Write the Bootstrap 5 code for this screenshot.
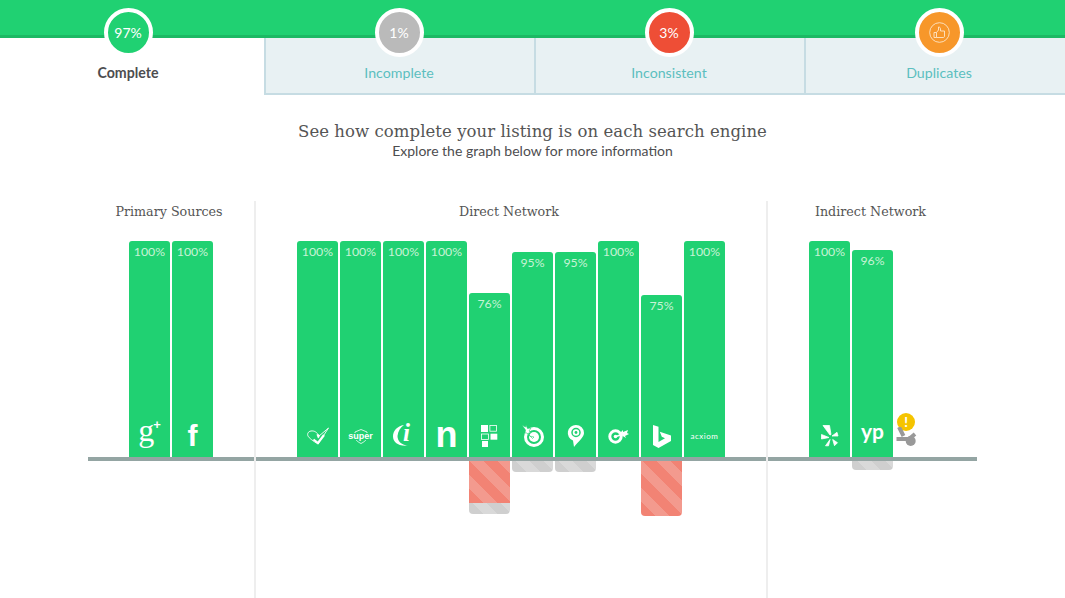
<!DOCTYPE html>
<html lang="en"><head><meta charset="utf-8"><title>Listing</title>
<link rel="stylesheet" href="https://cdn.jsdelivr.net/npm/bootstrap@5.3.0/dist/css/bootstrap.min.css">
<style>
html,body{height:100%;overflow:hidden}
body{font-family:"Lato","Noto Sans",sans-serif;color:#4d4d4f;background:#fff}
.topstrip{height:38px;background:#20d172;border-bottom:3px solid #1cb964}
.tabrow{height:57px}
.tabcell{width:270px;flex:none;padding-right:2px;background:#e8f1f3;border-left:2px solid #c6dce3;border-bottom:2px solid #c6dce3;color:#5cbfbf;font-size:14.2px}
.tabcell.firstcell{width:264px;padding-right:8px;background:#fff;border:0;color:#4d4d4f;font-weight:700}
.dial{width:49px;height:49px;margin-top:-30px;border:4px solid #fff;border-radius:50%;color:#fff;font-size:14px;font-weight:400}
.dial-green{background:#20d172}.dial-grey{background:#bababa}.dial-red{background:#ee4e36}.dial-orange{background:#f7972a}
.tablabel{margin-top:7px;line-height:17px}
.headline{margin-top:26px;font-family:"DejaVu Serif",serif;font-size:16.5px;line-height:21px;color:#555;letter-spacing:.06px}
.subline{font-size:14px;line-height:18px;color:#4d4d4f}
.chartwrap{margin:41px 88px 0;width:889px;height:397px}
.zone{height:397px}
.zone-a{width:166px}.zone-b{width:514px;border-left:2px solid #eee;border-right:2px solid #eee}.zone-c{width:209px}
.zonetitle{font-family:"DejaVu Serif",serif;font-size:12.7px;line-height:22px;color:#555;text-align:center;height:40px;padding-right:4px}
.barsplit{height:216px;gap:2px}
.underrow{gap:2px}
.barbase{height:4px;background:#94a5a3}
.barcol{width:41px}
.barfill{background:#20d172;border-radius:3px 3px 0 0;color:#c8f3d6;font-size:12.3px;line-height:14px;padding-top:4px}
.barlogo{height:40px;margin-bottom:1px;color:#fff}
.barlogo svg{display:block;overflow:visible}
.undercol{width:41px}
.under-red{background:repeating-linear-gradient(45deg,#f28374 0 10px,#f39a8e 10px 20px)}
.under-grey{background:repeating-linear-gradient(45deg,#cfcfcf 0 10px,#d9d9d9 10px 20px)}
.under-end{border-radius:0 0 4px 4px}
.lg-gplus{font-family:"Liberation Serif",serif;font-size:32px;line-height:32px;padding-bottom:13px}
.lg-gplus sup{font-family:"Liberation Sans",sans-serif;font-size:13px;top:-.85em;font-weight:700;margin-left:-1px}
.lg-f{font-family:"Liberation Sans",sans-serif;font-weight:700;font-size:30px;line-height:30px}
.lg-n{font-family:"Liberation Sans",sans-serif;font-weight:700;font-size:36px;line-height:30px;padding-bottom:2px}
.lg-yp{font-size:21px;font-weight:700;line-height:24px;padding-bottom:10px}
.lg-super{font-family:"Liberation Sans",sans-serif;font-size:9px;font-weight:700;line-height:7px;background:#20d172;padding:0 1px}
.lg-acx{font-size:8px;line-height:8px;letter-spacing:.5px}
.alertpin{width:41px}
.alertdot{width:18px;height:18px;margin-left:2px;border-radius:50%;background:#f5c400;color:#fff;font-size:13px;font-weight:900;line-height:18px;text-align:center}
.toolmark{margin:-4px 0 10px}
</style></head><body>
<div class="topstrip"></div>
<div class="d-flex tabrow">
 <div class="tabcell firstcell d-flex flex-column align-items-center"><div class="dial dial-green d-flex align-items-center justify-content-center">97%</div><div class="tablabel">Complete</div></div>
 <div class="tabcell d-flex flex-column align-items-center"><div class="dial dial-grey d-flex align-items-center justify-content-center">1%</div><div class="tablabel">Incomplete</div></div>
 <div class="tabcell d-flex flex-column align-items-center"><div class="dial dial-red d-flex align-items-center justify-content-center">3%</div><div class="tablabel">Inconsistent</div></div>
 <div class="tabcell d-flex flex-column align-items-center"><div class="dial dial-orange d-flex align-items-center justify-content-center">
  <svg width="21" height="21" viewBox="0 0 21 21" fill="none" stroke="#fde6c8" stroke-width=".9"><circle cx="10.500" cy="10.500" r="9.800"/><path d="M5 10.500h2.500v5H5zM7.500 10.500l2-2.500V5c1.500 0 2 1 2 2v2h4v5c0 1-.5 1.500-1.500 1.500H7.500"/></svg>
 </div><div class="tablabel">Duplicates</div></div>
</div>
<div class="text-center">
 <div class="headline">See how complete your listing is on each search engine</div>
 <div class="subline">Explore the graph below for more information</div>
</div>
<div class="chartwrap d-flex">
 <div class="zone zone-a">
  <div class="zonetitle">Primary Sources</div>
  <div class="barsplit d-flex justify-content-center">
   <div class="barcol d-flex flex-column justify-content-end"><div class="barfill text-center d-flex flex-column justify-content-between" style="height:216px"><span>100%</span><div class="barlogo d-flex align-items-center justify-content-center"><span class="lg-gplus">g<sup>+</sup></span></div></div></div>
   <div class="barcol d-flex flex-column justify-content-end"><div class="barfill text-center d-flex flex-column justify-content-between" style="height:216px"><span>100%</span><div class="barlogo d-flex align-items-center justify-content-center"><span class="lg-f">f</span></div></div></div>
  </div>
  <div class="barbase"></div>
 </div>
 <div class="zone zone-b">
  <div class="zonetitle">Direct Network</div>
  <div class="barsplit d-flex justify-content-center">
   <div class="barcol d-flex flex-column justify-content-end"><div class="barfill text-center d-flex flex-column justify-content-between" style="height:216px"><span>100%</span><div class="barlogo d-flex align-items-center justify-content-center"><svg width="22" height="18" viewBox="0 0 22 18" fill="none" stroke="#fff"><path d="M21.500 1L12 9C10 5 7 3.500 4 4 1 4.500 0 7 1 9c1 2 5 5 10 8L21.500 1" stroke-width=".9"/><path d="M6.500 12.500L11 16l6-8" stroke-width="2.200"/><path d="M9.500 7.500c1-.5 2-.5 3 .5v2l-1.500 1.500z" fill="#fff" stroke="none"/></svg></div></div></div>
   <div class="barcol d-flex flex-column justify-content-end"><div class="barfill text-center d-flex flex-column justify-content-between" style="height:216px"><span>100%</span><div class="barlogo d-flex align-items-center justify-content-center position-relative"><svg width="14" height="15" viewBox="0 0 14 15" fill="none" stroke="#fff" stroke-width=".8"><path d="M7 .5l6 2.500v5c0 3-3 5-6 6.500-3-1.500-6-3.500-6-6.500V3z"/></svg><span class="lg-super position-absolute">super</span></div></div></div>
   <div class="barcol d-flex flex-column justify-content-end"><div class="barfill text-center d-flex flex-column justify-content-between" style="height:216px"><span>100%</span><div class="barlogo d-flex align-items-center justify-content-center"><svg width="22" height="22" viewBox="0 0 22 22"><path d="M11 0C4 1 0 6 0 11.500 0 17 5 21.500 15 20.500 8 20 4.500 16 4.500 11 5 6 7.500 2.500 11 0z" fill="#fff"/><text x="10" y="16" font-family="Liberation Serif" font-style="italic" font-weight="700" font-size="25" fill="#fff">i</text></svg></div></div></div>
   <div class="barcol d-flex flex-column justify-content-end"><div class="barfill text-center d-flex flex-column justify-content-between" style="height:216px"><span>100%</span><div class="barlogo d-flex align-items-center justify-content-center"><span class="lg-n">n</span></div></div></div>
   <div class="barcol d-flex flex-column justify-content-end"><div class="barfill text-center d-flex flex-column justify-content-between" style="height:164px"><span>76%</span><div class="barlogo d-flex align-items-center justify-content-center"><svg width="17" height="22" viewBox="0 0 17 22"><rect x="0" y="0" width="7" height="7" fill="#fff"/><rect x="8.900" y=".4" width="6.500" height="5.800" fill="none" stroke="#fff" stroke-width=".8"/><rect x=".4" y="9" width="7" height="5.500" fill="none" stroke="#fff" stroke-width=".8"/><rect x="9.500" y="8.700" width="6.800" height="6" fill="#fff"/><rect x="1" y="16" width="6" height="6" fill="#fff"/></svg></div></div></div>
   <div class="barcol d-flex flex-column justify-content-end"><div class="barfill text-center d-flex flex-column justify-content-between" style="height:205px"><span>95%</span><div class="barlogo d-flex align-items-center justify-content-center"><svg width="22" height="22" viewBox="0 0 22 22" fill="none"><circle cx="12" cy="12" r="8.500" stroke="#fff" stroke-width="3"/><circle cx="12" cy="12" r="5" fill="#fff"/><path d="M0 0l3.500 2 .5-2 1.500 3.500L9 3 7 6l2 1.500-2.500.5 1 3L12 12l-1.500 1.500L5 8l-2 0 .5-3z" fill="#fff" stroke="#20d172" stroke-width=".6"/></svg></div></div></div>
   <div class="barcol d-flex flex-column justify-content-end"><div class="barfill text-center d-flex flex-column justify-content-between" style="height:205px"><span>95%</span><div class="barlogo d-flex align-items-center justify-content-center"><svg width="16" height="22" viewBox="0 0 16 22"><path d="M8 0a8 8 0 0 1 8 8c0 4-5 8-10 14L5 15.500A8 8 0 0 1 8 0z" fill="#fff"/><circle cx="8" cy="7.500" r="4" fill="none" stroke="#20d172" stroke-width="1.500"/><circle cx="8" cy="7.500" r="1.400" fill="#20d172"/></svg></div></div></div>
   <div class="barcol d-flex flex-column justify-content-end"><div class="barfill text-center d-flex flex-column justify-content-between" style="height:216px"><span>100%</span><div class="barlogo d-flex align-items-center justify-content-center"><svg width="22" height="15" viewBox="0 0 22 15" fill="none"><circle cx="7.500" cy="7.500" r="5.700" stroke="#fff" stroke-width="3"/><circle cx="7.500" cy="7.500" r="1.800" fill="#fff"/><path d="M8 7.500L15 5" stroke="#fff" stroke-width="1.800"/><path d="M13 3l2-2v2l5-2-1 3 2 1-4 2 1 2-5-3z" fill="#fff"/></svg></div></div></div>
   <div class="barcol d-flex flex-column justify-content-end"><div class="barfill text-center d-flex flex-column justify-content-between" style="height:162px"><span>75%</span><div class="barlogo d-flex align-items-center justify-content-center"><svg width="18" height="23" viewBox="0 0 18 23"><path d="M0 0l5.500 1.800v15.200l6.500-3.800-3.200-1.500-2-5L18 10.500v5.500L5.500 23 0 20z" fill="#fff"/></svg></div></div></div>
   <div class="barcol d-flex flex-column justify-content-end"><div class="barfill text-center d-flex flex-column justify-content-between" style="height:216px"><span>100%</span><div class="barlogo d-flex align-items-center justify-content-center"><span class="lg-acx">acxiom</span></div></div></div>
  </div>
  <div class="barbase"></div>
  <div class="underrow d-flex justify-content-center">
   <div class="undercol"></div><div class="undercol"></div><div class="undercol"></div><div class="undercol"></div>
   <div class="undercol"><div class="under-red" style="height:42px"></div><div class="under-grey under-end" style="height:11px"></div></div>
   <div class="undercol"><div class="under-grey under-end" style="height:11px"></div></div>
   <div class="undercol"><div class="under-grey under-end" style="height:11px"></div></div>
   <div class="undercol"></div>
   <div class="undercol"><div class="under-red under-end" style="height:55px"></div></div>
   <div class="undercol"></div>
  </div>
 </div>
 <div class="zone zone-c">
  <div class="zonetitle">Indirect Network</div>
  <div class="barsplit d-flex justify-content-center">
   <div class="barcol d-flex flex-column justify-content-end"><div class="barfill text-center d-flex flex-column justify-content-between" style="height:216px"><span>100%</span><div class="barlogo d-flex align-items-center justify-content-center"><svg width="18" height="22" viewBox="0 0 18 22" fill="#fff" stroke="#fff" stroke-width=".8" stroke-linejoin="round"><path d="M2 .5h6.500L10 9.500l-1 .5zM.5 9.500v4.500l7.500-1.500zM4.500 20.800h3L9 14.500zM11.700 14.500l4.800 3.200-3 3zM11 11l5-3.700 1 3.700z"/></svg></div></div></div>
   <div class="barcol d-flex flex-column justify-content-end"><div class="barfill text-center d-flex flex-column justify-content-between" style="height:207px"><span>96%</span><div class="barlogo d-flex align-items-center justify-content-center"><span class="lg-yp">yp</span></div></div></div>
   <div class="alertpin d-flex flex-column justify-content-end align-items-start"><div class="alertdot">!</div><svg class="toolmark" width="22" height="20" viewBox="0 0 22 20" fill="none" stroke="#999"><path d="M4 0l4.500 9M14 12L20 7M1.500 12H15" stroke-width="4" /><circle cx="15.700" cy="14" r="5" fill="#999" stroke="none"/></svg></div>
  </div>
  <div class="barbase"></div>
  <div class="underrow d-flex justify-content-center">
   <div class="undercol"></div>
   <div class="undercol"><div class="under-grey under-end" style="height:9px"></div></div>
   <div class="undercol"></div>
  </div>
 </div>
</div>
<script src="https://cdn.jsdelivr.net/npm/bootstrap@5.3.0/dist/js/bootstrap.bundle.min.js"></script>
</body></html>
